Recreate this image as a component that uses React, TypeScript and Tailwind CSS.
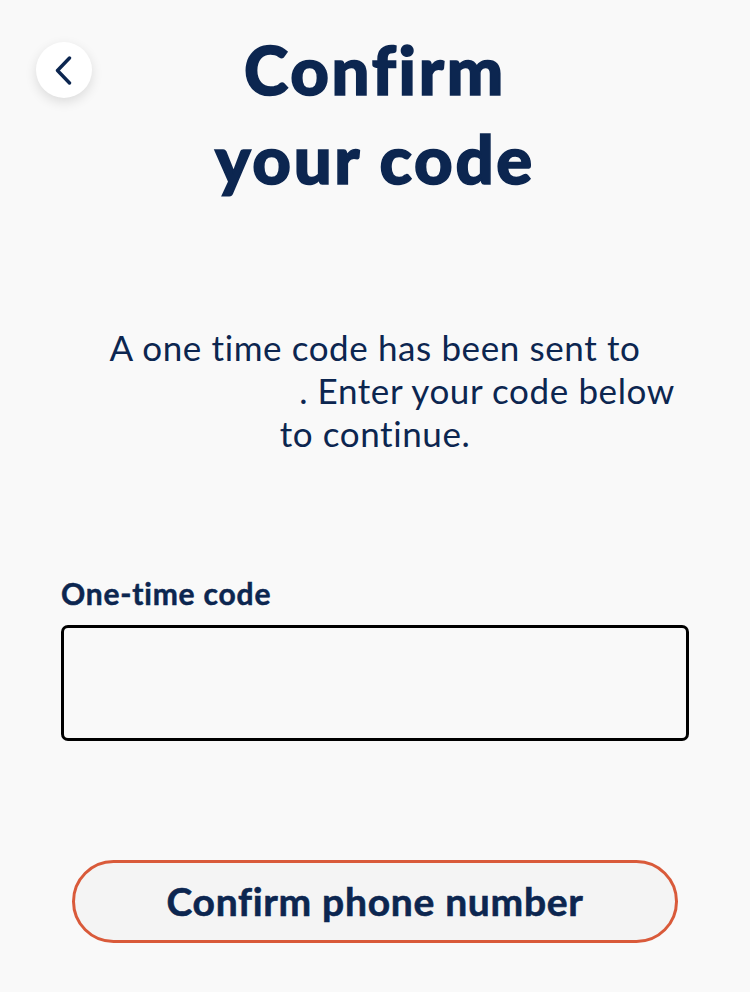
import React from "react";

export default function App() {
  return (
    <div
      className="w-[750px] h-[992px] bg-[#f9f9f9] text-[#0c2650] flex flex-col relative overflow-hidden"
      style={{ fontFamily: "Lato, 'Open Sans', sans-serif" }}
    >
      <button className="absolute left-[36px] top-[42px] w-[56px] h-[56px] rounded-full bg-white shadow-[0_4px_12px_rgba(0,0,0,0.12)] flex items-center justify-center">
        <svg width="17" height="29" viewBox="0 0 17 29" fill="none" stroke="#0c2650" strokeWidth="3.4" strokeLinecap="round" strokeLinejoin="round" className="-ml-[2px]">
          <path d="M14.5 2 L2.5 14.5 L14.5 27" />
        </svg>
      </button>

      <h1 className="mt-[25px] text-center text-[67px] leading-[89px] font-black tracking-[2.7px] [-webkit-text-stroke:1.6px_#0c2650]">
        Confirm
        <br />
        your code
      </h1>

      <p className="mt-[123px] mx-auto w-[620px] text-center text-[35px] leading-[43px] font-normal tracking-[0.6px]">
        A one time code has been sent to <span className="inline-block w-[224px]"></span>. Enter your code below to continue.
      </p>

      <div className="mt-[120px] px-[61px] flex flex-col">
        <label className="text-[30px] leading-[36px] font-bold tracking-[0.8px] [-webkit-text-stroke:0.5px_#0c2650]">One-time code</label>
        <input className="mt-[14px] h-[116px] w-full rounded-[7px] border-[3px] border-black bg-transparent outline-none" />
      </div>

      <div className="mt-[119px] px-[72px]">
        <button className="w-full h-[83px] rounded-full border-[3px] border-[#d95a3a] bg-[#f4f4f4] text-[39px] leading-[47px] font-bold tracking-[0.7px] text-[#0c2650] [-webkit-text-stroke:0.6px_#0c2650]">
          Confirm phone number
        </button>
      </div>
    </div>
  );
}
